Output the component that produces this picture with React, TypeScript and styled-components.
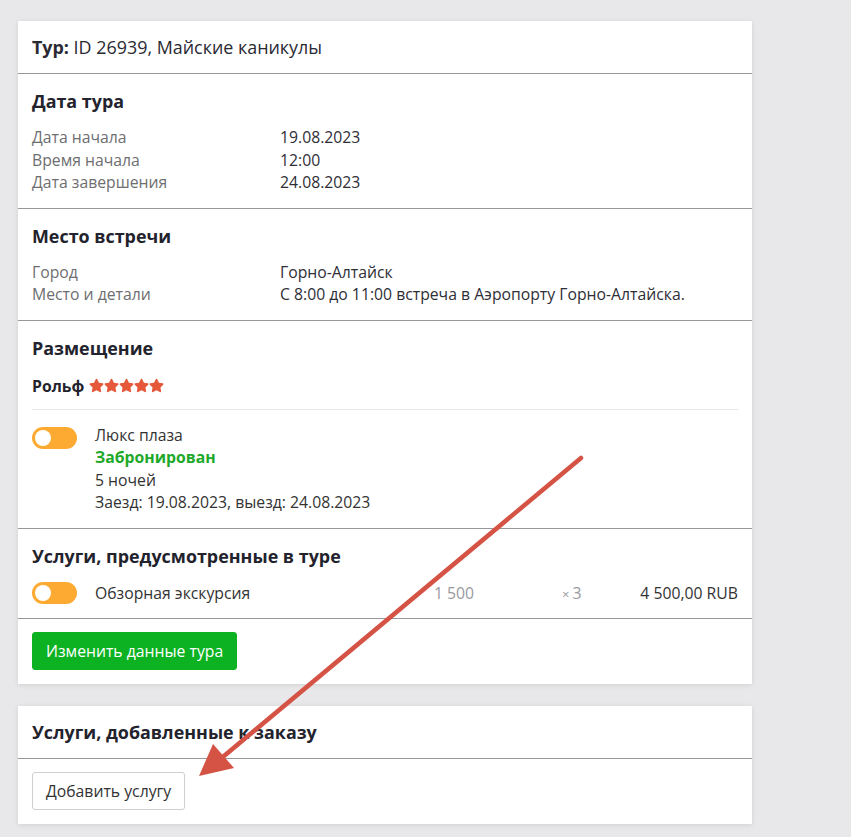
import React from "react";
import styled, { createGlobalStyle } from "styled-components";
import { FaStar } from "react-icons/fa";

const GlobalStyle = createGlobalStyle`
  html, body {
    margin: 0;
    padding: 0;
    background: #e8e8ea;
    font-family: "Open Sans", "Liberation Sans", sans-serif;
    color: #333;
  }
`;

const Page = styled.div`
  position: relative;
  width: 851px;
  min-height: 837px;
  padding-left: 18px;
  box-sizing: border-box;
  display: flex;
  flex-direction: column;
  gap: 21px;
`;

const Stub = styled.div`
  width: 734px;
  height: 0;
  background: #fff;
  box-shadow: 0 1px 4px rgba(0, 0, 0, 0.12);
`;

const Card = styled.div`
  width: 734px;
  background: #fff;
  box-shadow: 0 1px 5px rgba(0, 0, 0, 0.1);
  & + & {
    margin-top: 1px;
  }
`;

const Section = styled.div<{ $last?: boolean }>`
  padding: 13px 14px 14px;
  border-bottom: ${(p) => (p.$last ? "none" : "1px solid #97979c")};
`;

const Header = styled.div`
  padding: 14px 14px;
  border-bottom: 1px solid #97979c;
  font-size: 17.9px;
  line-height: 24px;
  color: #2a2a33;
  b {
    font-weight: 700;
  }
`;

const Heading = styled.div`
  font-size: 17.9px;
  line-height: 28px;
  font-weight: 700;
  color: #23232d;
`;

const HeaderTitle = styled(Heading)`
  line-height: 24px;
`;

const InfoTable = styled.div`
  margin-top: 11px;
  display: grid;
  grid-template-columns: 248px 1fr;
  font-size: 15.75px;
  line-height: 22.5px;
`;

const Label = styled.div`
  color: #6e6e70;
`;

const Value = styled.div`
  color: #2e2e36;
`;

const Hotel = styled.div`
  margin-top: 13px;
  height: 22px;
  display: flex;
  align-items: center;
  gap: 5px;
  font-size: 15.75px;
  font-weight: 700;
  color: #23232d;
  padding-bottom: 12px;
  border-bottom: 1px solid #e6e6e8;
`;

const Stars = styled.span`
  display: inline-flex;
  color: #e5583a;
`;

const RoomRow = styled.div`
  padding-top: 14px;
  display: grid;
  grid-template-columns: 63px 1fr;
  font-size: 15.75px;
  line-height: 22.5px;
  color: #333;
`;

const Booked = styled.div`
  color: #1ea92a;
  font-weight: 700;
`;

const Toggle = styled.span`
  display: block;
  position: relative;
  width: 45px;
  height: 22px;
  border-radius: 11px;
  background: #fdaa33;
  &::after {
    content: "";
    position: absolute;
    left: 3px;
    top: 3px;
    width: 16px;
    height: 16px;
    border-radius: 50%;
    background: #fff;
  }
`;

const ToggleCell = styled.div`
  padding-top: 3px;
`;

const ServiceRow = styled.div`
  margin-top: 12px;
  height: 22px;
  display: grid;
  grid-template-columns: 63px 339px 128px 1fr auto;
  align-items: center;
  font-size: 15.75px;
  line-height: 22px;
  color: #333;
`;

const Muted = styled.div`
  color: #9a9aa0;
`;

const Times = styled.span`
  font-size: 13px;
  margin-right: 3px;
`;

const Button = styled.button<{ $primary?: boolean }>`
  display: inline-block;
  height: 38px;
  padding: 0 13px;
  font-family: "Open Sans", "Liberation Sans", sans-serif;
  font-size: 15.75px;
  border-radius: 3px;
  cursor: pointer;
  background: ${(p) => (p.$primary ? "#0cb222" : "#fff")};
  color: ${(p) => (p.$primary ? "#fff" : "#333")};
  border: 1px solid ${(p) => (p.$primary ? "#0cb222" : "#cfcfd3")};
`;

const Overlay = styled.svg`
  position: absolute;
  left: 0;
  top: 0;
  pointer-events: none;
`;

const App: React.FC = () => {
  return (
    <>
      <GlobalStyle />
      <Page>
        <Stub />
        <Card>
          <Header>
            <b>Тур:</b> ID 26939, Майские каникулы
          </Header>
          <Section>
            <Heading>Дата тура</Heading>
            <InfoTable>
              <Label>Дата начала</Label>
              <Value>19.08.2023</Value>
              <Label>Время начала</Label>
              <Value>12:00</Value>
              <Label>Дата завершения</Label>
              <Value>24.08.2023</Value>
            </InfoTable>
          </Section>
          <Section>
            <Heading>Место встречи</Heading>
            <InfoTable>
              <Label>Город</Label>
              <Value>Горно-Алтайск</Value>
              <Label>Место и детали</Label>
              <Value>С 8:00 до 11:00 встреча в Аэропорту Горно-Алтайска.</Value>
            </InfoTable>
          </Section>
          <Section>
            <Heading>Размещение</Heading>
            <Hotel>
              Рольф
              <Stars>
                {[0, 1, 2, 3, 4].map((i) => (
                  <FaStar key={i} size={15} />
                ))}
              </Stars>
            </Hotel>
            <RoomRow>
              <ToggleCell>
                <Toggle />
              </ToggleCell>
              <div>
                <div>Люкс плаза</div>
                <Booked>Забронирован</Booked>
                <div>5 ночей</div>
                <div>Заезд: 19.08.2023, выезд: 24.08.2023</div>
              </div>
            </RoomRow>
          </Section>
          <Section>
            <Heading>Услуги, предусмотренные в туре</Heading>
            <ServiceRow>
              <Toggle />
              <div>Обзорная экскурсия</div>
              <Muted>1 500</Muted>
              <Muted>
                <Times>×</Times>3
              </Muted>
              <div>4 500,00 RUB</div>
            </ServiceRow>
          </Section>
          <Section $last>
            <Button $primary>Изменить данные тура</Button>
          </Section>
        </Card>
        <Card>
          <Header>
            <HeaderTitle>Услуги, добавленные к заказу</HeaderTitle>
          </Header>
          <Section $last>
            <Button>Добавить услугу</Button>
          </Section>
        </Card>
        <Overlay width="851" height="837" viewBox="0 0 851 837">
          <line
            x1="581"
            y1="458"
            x2="218"
            y2="761"
            stroke="#d45345"
            strokeWidth="4.5"
            strokeLinecap="round"
          />
          <polygon points="199,776 213,744 234,768" fill="#d45345" />
        </Overlay>
      </Page>
    </>
  );
};

export default App;
